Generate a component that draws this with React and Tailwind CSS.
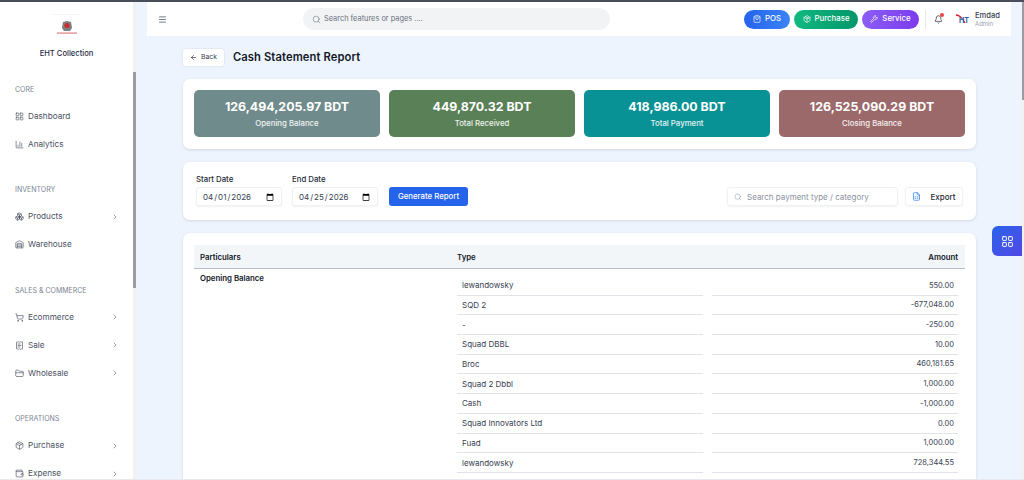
import {
  ArrowLeft, Bell, Boxes, ChartColumn, ChevronRight, FileSpreadsheet, FolderClosed, LayoutGrid,
  Menu, Package, ReceiptText, Search, ShoppingBag, ShoppingCart, Wallet, Warehouse, Wrench,
} from 'lucide-react';

const NAV = [
  { label: 'CORE', items: [['Dashboard', LayoutGrid], ['Analytics', ChartColumn]] },
  { label: 'INVENTORY', items: [['Products', Boxes, true], ['Warehouse', Warehouse]] },
  { label: 'SALES & COMMERCE', items: [['Ecommerce', ShoppingCart, true], ['Sale', ReceiptText, true], ['Wholesale', FolderClosed, true]] },
  { label: 'OPERATIONS', items: [['Purchase', Package, true], ['Expense', Wallet, true]] },
];

const STATS = [
  ['126,494,205.97 BDT', 'Opening Balance', 'bg-[#6f8b8b]'],
  ['449,870.32 BDT', 'Total Received', 'bg-[#5a8057]'],
  ['418,986.00 BDT', 'Total Payment', 'bg-[#099295]'],
  ['126,525,090.29 BDT', 'Closing Balance', 'bg-[#9b696a]'],
];

const ROWS = [
  ['lewandowsky', '550.00'],
  ['SQD 2', '-677,048.00'],
  ['-', '-250.00'],
  ['Squad DBBL', '10.00'],
  ['Broc', '460,181.65'],
  ['Squad 2 Dbbl', '1,000.00'],
  ['Cash', '-1,000.00'],
  ['Squad Innovators Ltd', '0.00'],
  ['Fuad', '1,000.00'],
  ['lewandowsky', '728,344.55'],
];

function Sidebar() {
  return (
    <aside className="flex h-full w-[136px] shrink-0 bg-white">
      <div className="min-w-0 flex-1">
        <div className="flex h-[68px] flex-col items-center">
          <div className="mt-[12px] h-px w-[27px] bg-gray-100" />
          <svg className="mt-[5px]" width="22" height="16" viewBox="0 0 22 16">
            <path d="M7 2l4-1 4 1 1 6-2 3H8L6 8z" fill="#7d8087" />
            <circle cx="11" cy="5.5" r="2.6" fill="#c9302c" />
            <rect x="1" y="12.5" width="20" height="1.2" fill="#e0807c" />
          </svg>
          <div className="mt-[12px] text-[7.6px] font-medium leading-[12px] text-[#1f2a44]">EHT Collection</div>
        </div>
        <nav className="pl-[15px] pr-[14px]">
          {NAV.map((s) => (
            <div key={s.label} className="mb-[26.5px]">
              <div className="mt-[14px] flex h-[12px] items-center text-[7px] text-[#7b8494]">{s.label}</div>
              <div className="mt-[6px]">
                {s.items.map(([name, Icon, more]) => (
                  <div key={name} className="flex h-[28px] items-center text-[8.2px] text-[#4a5262]">
                    <Icon size={9} strokeWidth={1.7} className="mr-[4px] shrink-0" />
                    <span className="flex-1">{name}</span>
                    {more && <ChevronRight size={8} strokeWidth={1.6} />}
                  </div>
                ))}
              </div>
            </div>
          ))}
        </nav>
      </div>
      <div className="h-full w-[3px] shrink-0 bg-[#f1f1f1]">
        <div className="mt-[70px] h-[216px] bg-[#9b9ba0]" />
      </div>
    </aside>
  );
}

function Header() {
  return (
    <header className="flex h-[34px] items-center bg-white pl-[11px] pr-[11px]">
      <Menu size={9} strokeWidth={2} className="text-[#4a5262]" />
      <div className="ml-[136px] flex h-[22px] w-[307px] items-center rounded-full bg-[#f1f3f5] pl-[9px] text-[7.4px] text-[#6b7280]">
        <Search size={9} strokeWidth={1.5} className="mr-[3px]" />
        Search features or pages ....
      </div>
      <div className="ml-auto flex items-center gap-[4px] text-[7.8px] font-medium text-white">
        <div className="flex h-[19px] w-[46px] items-center justify-center gap-[4px] rounded-full bg-gradient-to-r from-[#2563eb] to-[#3b82f6]">
          <ShoppingBag size={8} />POS
        </div>
        <div className="flex h-[19px] w-[64px] items-center justify-center gap-[4px] rounded-full bg-gradient-to-r from-[#10b981] to-[#059669]">
          <Package size={8} />Purchase
        </div>
        <div className="flex h-[19px] w-[57px] items-center justify-center gap-[4px] rounded-full bg-gradient-to-r from-[#8b5cf6] to-[#7c3aed]">
          <Wrench size={8} />Service
        </div>
      </div>
      <div className="ml-[6px] h-[19px] w-px bg-gray-200" />
      <div className="relative ml-[8px]">
        <Bell size={9} strokeWidth={1.8} className="text-[#1f2937]" />
        <span className="absolute right-[-1px] top-[-2px] h-[4px] w-[4px] rounded-full bg-[#ef4444]" />
      </div>
      <svg className="ml-[12px]" width="15" height="12" viewBox="0 0 15 12">
        <path d="M1 2c3 0 7 3 9 8" fill="none" stroke="#e11d2e" strokeWidth="1.3" />
        <text x="4" y="9.5" fontSize="7" fontWeight="700" fill="#2563a8" fontFamily="Inter, sans-serif">HT</text>
      </svg>
      <div className="ml-[5px] w-[25px]">
        <div className="text-[7.6px] font-medium leading-[9px] text-[#374151]">Emdad</div>
        <div className="text-[6px] leading-[8px] text-[#9ca3af]">Admin</div>
      </div>
    </header>
  );
}

function DateField({ label, value }) {
  return (
    <label className="block">
      <div className="text-[7.8px] font-medium leading-[11px] text-[#1f2937]">{label}</div>
      <input
        type="date"
        defaultValue={value}
        className="mt-[2px] block h-[19px] w-[86px] rounded-[3px] border border-[#f0f1f3] bg-white px-[5px] text-[8px] text-[#374151] shadow-[0_1px_2px_rgba(0,0,0,0.05)]"
      />
    </label>
  );
}

function Report() {
  return (
    <div className="px-[36px] pr-[35px]">
      <div className="mt-[13px] flex h-[17px] items-center">
        <button className="flex h-[17px] w-[41px] items-center justify-center gap-[4px] rounded-[3px] bg-white text-[6.8px] text-[#374151] shadow-[0_0_2px_rgba(0,0,0,0.15)]">
          <ArrowLeft size={7} strokeWidth={2} className="text-[#111827]" />Back
        </button>
        <h1 className="ml-[9px] text-[11.2px] font-semibold tracking-[0.1px] text-[#111827]">Cash Statement Report</h1>
      </div>

      <section className="mt-[13px] grid grid-cols-4 gap-[9px] rounded-[7px] bg-white px-[11px] pb-[12px] pt-[11px] shadow-[0_1px_3px_rgba(15,23,42,0.12)]">
        {STATS.map(([value, label, bg]) => (
          <div key={label} className={`flex h-[47px] flex-col items-center justify-center rounded-[5px] text-white ${bg}`}>
            <div className="text-[12.4px] font-bold leading-[18px]">{value}</div>
            <div className="mt-[2px] text-[7.8px] font-medium leading-[11px] text-white/90">{label}</div>
          </div>
        ))}
      </section>

      <section className="mt-[13px] flex h-[58px] items-end rounded-[7px] bg-white px-[13px] pb-[14px] shadow-[0_1px_3px_rgba(15,23,42,0.12)]">
        <DateField label="Start Date" value="2026-04-01" />
        <div className="ml-[10px]"><DateField label="End Date" value="2026-04-25" /></div>
        <button className="ml-[11px] h-[19px] w-[79px] rounded-[3px] bg-[#2563eb] text-[7.8px] font-medium text-white">Generate Report</button>
        <div className="ml-auto flex h-[19px] w-[171px] items-center rounded-[3px] border border-[#f0f1f3] pl-[6px] text-[8px] text-[#8b929e] shadow-[0_1px_2px_rgba(0,0,0,0.05)]">
          <Search size={8} strokeWidth={1.5} className="mr-[5px]" />
          Search payment type / category
        </div>
        <button className="ml-[7px] flex h-[19px] w-[58px] items-center justify-center gap-[9px] rounded-[3px] border border-[#f0f1f3] text-[8px] font-medium text-[#1f2937] shadow-[0_1px_2px_rgba(0,0,0,0.05)]">
          <FileSpreadsheet size={9} className="text-[#3b82f6]" />Export
        </button>
      </section>

      <section className="mt-[13px] rounded-[7px] bg-white px-[11px] pb-[40px] pt-[12px] shadow-[0_1px_3px_rgba(15,23,42,0.12)]">
        <div className="flex h-[24px] items-center border-b-[1.5px] border-[#b9bfc8] bg-[#f3f6f9] pt-[2px] text-[7.8px] font-semibold text-[#111827]">
          <div className="w-[263px] pl-[6px]">Particulars</div>
          <div className="flex-1">Type</div>
          <div className="pr-[7px]">Amount</div>
        </div>
        <div className="flex">
          <div className="w-[263px] pl-[6px] pt-[3px] text-[7.8px] font-semibold leading-[12px] text-[#111827]">Opening Balance</div>
          <div className="flex-1 pr-[7px] pt-[7px]">
            {ROWS.map(([type, amount], i) => (
              <div key={i} className="flex h-[19.7px] gap-[9px] text-[#374151]">
                <div className="flex w-[246px] items-center border-b border-[#e0e3e8] pl-[5px] text-[8px]">{type}</div>
                <div className="flex flex-1 items-center justify-end border-b border-[#e0e3e8] pr-[4px] text-[7.5px]">{amount}</div>
              </div>
            ))}
          </div>
        </div>
      </section>
    </div>
  );
}

export default function App() {
  return (
    <div className="relative flex h-[480px] w-[1024px] flex-col overflow-hidden bg-[#eef4fd] font-['Inter',sans-serif]">
      <div className="h-[2px] shrink-0 bg-[#4a4e5a]" />
      <div className="flex min-h-0 flex-1">
        <Sidebar />
        <main className="min-w-0 flex-1 overflow-hidden px-[11px]">
          <Header />
          <Report />
        </main>
        <div className="w-[2px] shrink-0 bg-[#f1f1f1]">
          <div className="h-[98px] bg-[#9b9ba0]" />
        </div>
      </div>
      <div className="h-px shrink-0 bg-[#e8e9ec]" />
      <div className="absolute right-[2px] top-[226px] flex h-[30px] w-[30px] items-center justify-center rounded-l-[6px] bg-gradient-to-br from-[#2563eb] to-[#4f46e5]">
        <LayoutGrid size={13} strokeWidth={1.8} className="text-white" />
      </div>
    </div>
  );
}
